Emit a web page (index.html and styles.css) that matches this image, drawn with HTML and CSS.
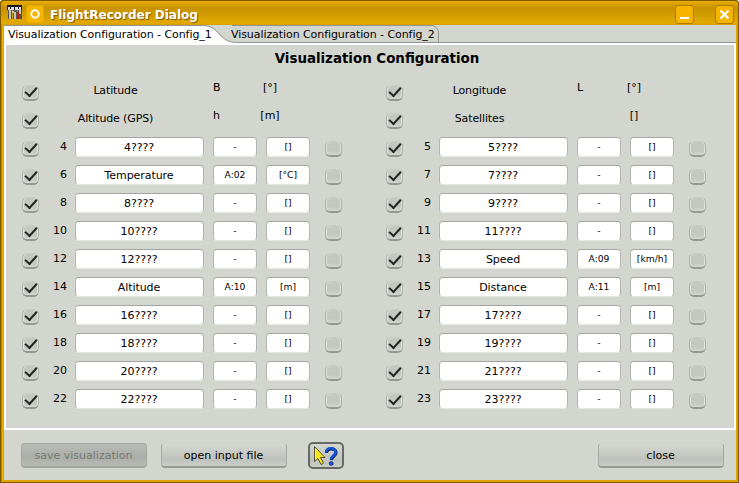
FILE: index.html
```html
<!DOCTYPE html>
<html lang="en">
<head>
<meta charset="utf-8">
<title>FlightRecorder Dialog</title>
<link rel="stylesheet" href="styles.css">
</head>
<body>
<div class="window">
  <header class="titlebar">
    <svg class="app-icon" width="16" height="16" viewBox="0 0 16 16" shape-rendering="crispEdges">
      <path fill="#ddd" d="M1 1h14v4H1z"/><path fill="#17172d" d="M0 0h15v2H0zM0 2h1v3H0zM3 2h1v2H3zM7 2h1v3H7zM11 2h1v2h-1zM14 2h1v3h-1z"/>
      <path fill="#54544a" d="M1 5h4v9H1zM6 5h4v9H6zM11 5h4v9h-4z"/>
      <path fill="#c9c5aa" d="M2 5h2v9H2zM5 6h2v2H5zM7 7h2v7H7zM12 5h2v4h-2z"/>
      <path fill="#b91c16" d="M10 7h2v7h-2z"/>
    </svg>
    <span class="win-btn menu"><svg width="18" height="18"><circle cx="9" cy="9" r="3.700" fill="none" stroke="#fff" stroke-width="2"/></svg></span>
    <h1>FlightRecorder Dialog</h1>
    <span class="win-btn minimize"><svg width="19" height="19"><path d="M5 13h9" stroke="#fff" stroke-width="2"/></svg></span>
    <span class="win-btn"><svg width="19" height="19"><path d="M5.500 5.500l8 8M13.500 5.500l-8 8" stroke="#fff" stroke-width="2.400"/></svg></span>
  </header>
  <nav class="tabs">
    <svg class="tab-shape" width="732" height="18">
      <path fill="#fff" d="M0 1H200C216 2 214 17 232 17.500V18H0z"/>
      <path fill="none" stroke="#92958d" d="M0 .5H200C216 1 214 17 232 17.500H732M228 .5H429C432 2 434.500 4 434.500 8V17"/>
    </svg>
    <span class="tab">Visualization Configuration - Config_1</span>
    <span class="tab second">Visualization Configuration - Config_2</span>
  </nav>
  <main class="pane">
    <h2>Visualization Configuration</h2>
    <div class="columns">
      <section class="column">
        <div class="row"><i class="check on"></i><b></b><span class="label">Latitude</span><span class="symbol">B</span><span class="unit">[°]</span></div>
        <div class="row"><i class="check on"></i><b></b><span class="label">Altitude (GPS)</span><span class="symbol">h</span><span class="unit">[m]</span></div>
        <div class="row"><i class="check on"></i><b>4</b><span class="field wide">4????</span><span class="field">-</span><span class="field">[]</span><i class="check"></i></div>
        <div class="row"><i class="check on"></i><b>6</b><span class="field wide">Temperature</span><span class="field">A:02</span><span class="field">[°C]</span><i class="check"></i></div>
        <div class="row"><i class="check on"></i><b>8</b><span class="field wide">8????</span><span class="field">-</span><span class="field">[]</span><i class="check"></i></div>
        <div class="row"><i class="check on"></i><b>10</b><span class="field wide">10????</span><span class="field">-</span><span class="field">[]</span><i class="check"></i></div>
        <div class="row"><i class="check on"></i><b>12</b><span class="field wide">12????</span><span class="field">-</span><span class="field">[]</span><i class="check"></i></div>
        <div class="row"><i class="check on"></i><b>14</b><span class="field wide">Altitude</span><span class="field">A:10</span><span class="field">[m]</span><i class="check"></i></div>
        <div class="row"><i class="check on"></i><b>16</b><span class="field wide">16????</span><span class="field">-</span><span class="field">[]</span><i class="check"></i></div>
        <div class="row"><i class="check on"></i><b>18</b><span class="field wide">18????</span><span class="field">-</span><span class="field">[]</span><i class="check"></i></div>
        <div class="row"><i class="check on"></i><b>20</b><span class="field wide">20????</span><span class="field">-</span><span class="field">[]</span><i class="check"></i></div>
        <div class="row"><i class="check on"></i><b>22</b><span class="field wide">22????</span><span class="field">-</span><span class="field">[]</span><i class="check"></i></div>
      </section>
      <section class="column">
        <div class="row"><i class="check on"></i><b></b><span class="label">Longitude</span><span class="symbol">L</span><span class="unit">[°]</span></div>
        <div class="row"><i class="check on"></i><b></b><span class="label">Satellites</span><span class="symbol"></span><span class="unit">[]</span></div>
        <div class="row"><i class="check on"></i><b>5</b><span class="field wide">5????</span><span class="field">-</span><span class="field">[]</span><i class="check"></i></div>
        <div class="row"><i class="check on"></i><b>7</b><span class="field wide">7????</span><span class="field">-</span><span class="field">[]</span><i class="check"></i></div>
        <div class="row"><i class="check on"></i><b>9</b><span class="field wide">9????</span><span class="field">-</span><span class="field">[]</span><i class="check"></i></div>
        <div class="row"><i class="check on"></i><b>11</b><span class="field wide">11????</span><span class="field">-</span><span class="field">[]</span><i class="check"></i></div>
        <div class="row"><i class="check on"></i><b>13</b><span class="field wide">Speed</span><span class="field">A:09</span><span class="field">[km/h]</span><i class="check"></i></div>
        <div class="row"><i class="check on"></i><b>15</b><span class="field wide">Distance</span><span class="field">A:11</span><span class="field">[m]</span><i class="check"></i></div>
        <div class="row"><i class="check on"></i><b>17</b><span class="field wide">17????</span><span class="field">-</span><span class="field">[]</span><i class="check"></i></div>
        <div class="row"><i class="check on"></i><b>19</b><span class="field wide">19????</span><span class="field">-</span><span class="field">[]</span><i class="check"></i></div>
        <div class="row"><i class="check on"></i><b>21</b><span class="field wide">21????</span><span class="field">-</span><span class="field">[]</span><i class="check"></i></div>
        <div class="row"><i class="check on"></i><b>23</b><span class="field wide">23????</span><span class="field">-</span><span class="field">[]</span><i class="check"></i></div>
      </section>
    </div>
  </main>
  <footer class="actions">
    <button class="btn disabled">save visualization</button>
    <button class="btn">open input file</button>
    <button class="btn help"><svg width="28" height="22" viewBox="0 0 28 22">
      <path d="M14.500 8c0-5.500 9.500-5.500 9.500-.5 0 4-4.500 3.500-4.500 7.500" fill="none" stroke="#07204f" stroke-width="3.200"/>
      <path d="M14 7.500c0-5.500 9.500-5.500 9.500-.5 0 4-4.500 3.500-4.500 7.500" fill="none" stroke="#1252d8" stroke-width="2.600"/>
      <circle cx="19.200" cy="18.500" r="2" fill="#1252d8" stroke="#07204f" stroke-width=".6"/>
      <path d="M2.500 1.500v15l3.500-3 3 6 2.500-1.300-3-5.700H13z" fill="#f5e524" stroke="#33311b" stroke-width=".8"/>
      <path d="M3.500 4v9" stroke="#fff9a5"/>
    </svg></button>
    <button class="btn close">close</button>
  </footer>
</div>
</body>
</html>
```
FILE: styles.css
```css
* { box-sizing: border-box; }

body {
  margin: 0;
  overflow: hidden;
  background: #fff;
  color: #000;
  font: 11px/14px "DejaVu Sans", sans-serif;
}

.window {
  display: flex;
  flex-direction: column;
  width: 739px;
  height: 483px;
  padding: 0 3px 3px 4px;
  border-radius: 4px 4px 0 0;
  background: #dea500;
  box-shadow: inset 1px 1px #7e5900, inset -1px -1px #7e5900, inset 2px 0 #b98600, inset 3px 0 #efb200;
}

.titlebar {
  display: flex;
  flex: 0 0 25px;
  align-items: center;
  margin: 0 -2px 0 -3px;
  padding: 3px 4px 0 6px;
  border-top: 1px solid #7e5900;
  border-radius: 4px 4px 0 0;
  background: linear-gradient(#edb000 0, #dea500 2px, #c79400 7px, #d49e00 15px, #e4aa00 22px, #d39c00);
}

.app-icon { margin: -3px 3px 0 0; }

.win-btn {
  width: 19px;
  height: 19px;
  border: 1px solid #ad7d00;
  border-radius: 3px;
  background: #f5b400;
}

.win-btn svg { display: block; margin: -1px; }
.win-btn.menu { width: 18px; height: 18px; margin-top: -1px; border-color: #e5a900; }
.minimize { margin-right: 21px; }

.titlebar h1 {
  flex: 1;
  margin: 0 0 0 6px;
  color: #fff;
  font-size: 12px;
  line-height: 20px;
  text-shadow: 1px 1px 1px #805c00;
}

.tabs {
  position: relative;
  display: flex;
  flex: 0 0 18px;
  padding: 3px 0 0 4px;
  background: #d3d6cf;
}

.tab-shape { position: absolute; left: 0; top: 0; }

.tab {
  position: relative;
  width: 223px;
  letter-spacing: -.07px;
  white-space: nowrap;
}

.pane {
  flex: 0 0 387px;
  border: 2px solid #fff;
  background: #d3d6cf;
}

.pane h2 {
  height: 36px;
  margin: 0;
  padding-left: 14px;
  font-size: 13.4px;
  line-height: 28px;
  text-align: center;
}

.columns { display: flex; gap: 44px; padding-left: 16px; }

.row {
  display: grid;
  grid-template-columns: 17px 36px 138px 53px 59px 17px;
  align-items: start;
  height: 28px;
}

.row b {
  padding: 3px 8px 0 0;
  font-weight: normal;
  text-align: right;
}

.label {
  width: 81px;
  padding-top: 3px;
  letter-spacing: -.13px;
  text-align: center;
  white-space: nowrap;
}

.unit { width: 8px; display: flex; justify-content: center; }

.field {
  width: 44px;
  height: 20px;
  border: 1px solid #b3b6b0;
  border-top-color: #a4a7a1;
  border-bottom-color: #e5e8e1;
  border-radius: 4px;
  background: #fff;
  font-size: 9.2px;
  line-height: 18px;
  text-align: center;
}

.field.wide { width: 129px; padding-right: 1px; font-size: 11px; line-height: 19px; letter-spacing: -.06px; }

.check {
  width: 17px;
  height: 16px;
  margin-top: 4px;
  border: 1px solid #adb0aa;
  border-top-color: #c9ccc5;
  border-bottom: 2px solid #969993;
  border-radius: 5px;
  background: linear-gradient(#c5c8c1, #c4c7c0 65%, #d2d5ce);
  box-shadow: inset 1px 0 #dfe2db, inset -1px 0 #dfe2db;
}

.check.on::after {
  content: "";
  display: block;
  width: 10px;
  height: 5px;
  margin: 2px 0 0 2px;
  border: solid #222;
  border-width: 0 0 2px 2px;
  transform: translateY(-1px) rotate(-48deg);
}

.actions {
  display: flex;
  flex: 1;
  align-items: flex-start;
  gap: 14px;
  padding: 13px 12px 0 17px;
  background: #d3d6cf;
}

.btn {
  width: 126px;
  height: 25px;
  padding: 1px 1px 0 0;
  border: 1px solid #a5a8a2;
  border-top-color: #d0d3cc;
  border-bottom: 2px solid #969993;
  border-radius: 4px;
  background: linear-gradient(#d5d8d1, #bfc2bc 70%, #cbcec7);
  color: #000;
  font: inherit;
}

.btn.disabled {
  border-color: #a4a7a1;
  background: linear-gradient(#b9bcb6, #abaea8 60%, #b8bbb4);
  color: #767974;
}

.btn.help {
  width: 36px;
  height: 27px;
  margin: -1px 0 0 7px;
  padding: 0;
  border: 2px solid #666965;
  border-radius: 5px;
}

.help svg { display: block; margin: 0 auto; }
.btn.close { margin-left: auto; }
```
